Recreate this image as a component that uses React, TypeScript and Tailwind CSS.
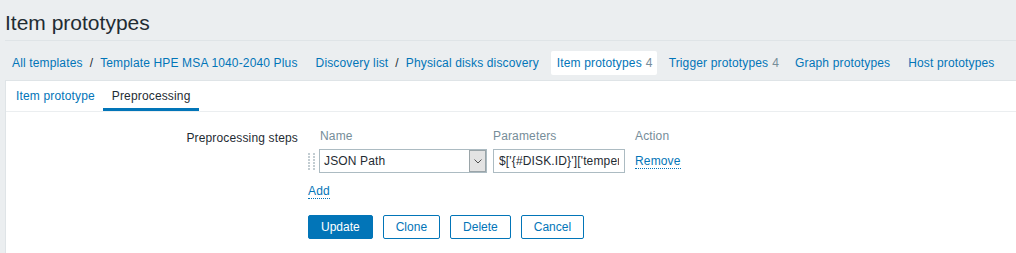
import React from "react";

const font = { fontFamily: '"Liberation Sans", Arial, sans-serif' };

function Crumb({ children, active, tight }: { children: React.ReactNode; active?: boolean; tight?: boolean }) {
  return (
    <div
      className={[
        "flex h-6 shrink-0 items-center whitespace-nowrap pl-1.5 leading-[24px]",
        tight ? "pr-[4px]" : "pr-1.5",
        active ? "rounded-[2px] bg-white" : "",
      ].join(" ")}
    >
      {children}
    </div>
  );
}

const Sep = () => <span className="px-[7px] text-[#1f2c33]">/</span>;

function DragHandle() {
  const rows = [0, 3, 6, 9, 12, 15];
  return (
    <svg width="7" height="17" viewBox="0 0 7 17">
      {rows.map((y) => (
        <g key={y} fill="#c3cdd2">
          <rect x="0" y={y} width="2" height="2" />
          <rect x="5" y={y} width="2" height="2" />
        </g>
      ))}
    </svg>
  );
}

const btn = "h-6 rounded-[2px] border border-[#0275b8] px-3 tracking-normal";

export default function App() {
  return (
    <div
      className="h-[253px] w-[1016px] overflow-hidden bg-[#ebeef0] pl-[5px] text-[12px] leading-[14px] tracking-[0.15px] text-[#1f2c33]"
      style={font}
    >
      {/* header */}
      <div className="border-b border-[#dfe4e7] pb-[5px] pt-[11px]">
        <h1 className="text-[21px] leading-[24px] tracking-normal text-[#1f2c33]">Item prototypes</h1>
      </div>

      {/* breadcrumbs / object groups */}
      <nav className="flex gap-[6px] whitespace-nowrap pb-[5px] pl-px pt-[10px] text-[#0275b8]">
        <Crumb>
          <span>All templates</span>
          <Sep />
          <span>Template HPE MSA 1040-2040 Plus</span>
        </Crumb>
        <Crumb>
          <span>Discovery list</span>
          <Sep />
          <span>Physical disks discovery</span>
        </Crumb>
        <Crumb active tight>
          <span>Item prototypes</span>
          <span className="ml-[4px] text-[#768d99]">4</span>
        </Crumb>
        <Crumb tight>
          <span>Trigger prototypes</span>
          <span className="ml-[4px] text-[#768d99]">4</span>
        </Crumb>
        <Crumb>Graph prototypes</Crumb>
        <Crumb>Host prototypes</Crumb>
      </nav>

      {/* panel */}
      <div className="h-[200px] border-l border-t border-[#dfe4e7] bg-white">
        <ul className="flex border-b border-[#ebeef0]">
          <li className="flex h-[30px] items-center border-b-[3px] border-transparent pl-[10px] pr-[8px] pt-[3px] text-[#0275b8]">
            Item prototype
          </li>
          <li className="flex h-[30px] items-center border-b-[3px] border-[#0275b8] px-[9px] pt-[3px] text-[#1f2c33]">
            Preprocessing
          </li>
        </ul>

        <div className="grid grid-cols-[302px_1fr] pt-[17px]">
          <div className="pr-[10px] pt-[2px] text-right">Preprocessing steps</div>

          <div className="flex flex-col items-start">
            <div className="grid grid-cols-[11px_174px_142px_auto] items-center">
              <div />
              <div className="pl-px text-[#768d99]">Name</div>
              <div className="text-[#768d99]">Parameters</div>
              <div className="text-[#768d99]">Action</div>

              <div className="col-span-4 h-[6px]" />

              <div className="flex h-6 items-center">
                <DragHandle />
              </div>
              <div className="flex h-6 w-[168px] border border-[#acbbc2] bg-white">
                <div className="flex flex-1 items-center pl-1 text-[#1f2c33]">JSON Path</div>
                <div className="flex w-[17px] items-center justify-center border border-[#9aa4a8] bg-[#e3e3e3]">
                  <svg width="8" height="5" viewBox="0 0 8 5">
                    <path d="M0.5 0.5 L4 4 L7.5 0.5" fill="none" stroke="#505050" strokeWidth="1" />
                  </svg>
                </div>
              </div>
              <div className="h-6 w-[132px] overflow-hidden border border-[#acbbc2] bg-white">
                <input
                  readOnly
                  value="$['{#DISK.ID}']['temperature']"
                  className="h-full w-full bg-transparent px-[5px] text-[12px] tracking-[0.15px] text-[#1f2c33] outline-none"
                  style={font}
                />
              </div>
              <div className="flex h-6 items-center">
                <span className="border-b border-dotted border-[#0275b8] text-[#0275b8]">Remove</span>
              </div>
            </div>

            <span className="mt-[11px] border-b border-dotted border-[#0275b8] text-[#0275b8]">Add</span>

            <div className="mt-[16px] flex gap-[10px]">
              <button className={`${btn} bg-[#0275b8] text-white`}>Update</button>
              <button className={`${btn} bg-white text-[#0275b8]`}>Clone</button>
              <button className={`${btn} bg-white text-[#0275b8]`}>Delete</button>
              <button className={`${btn} bg-white text-[#0275b8]`}>Cancel</button>
            </div>
          </div>
        </div>
      </div>
    </div>
  );
}
